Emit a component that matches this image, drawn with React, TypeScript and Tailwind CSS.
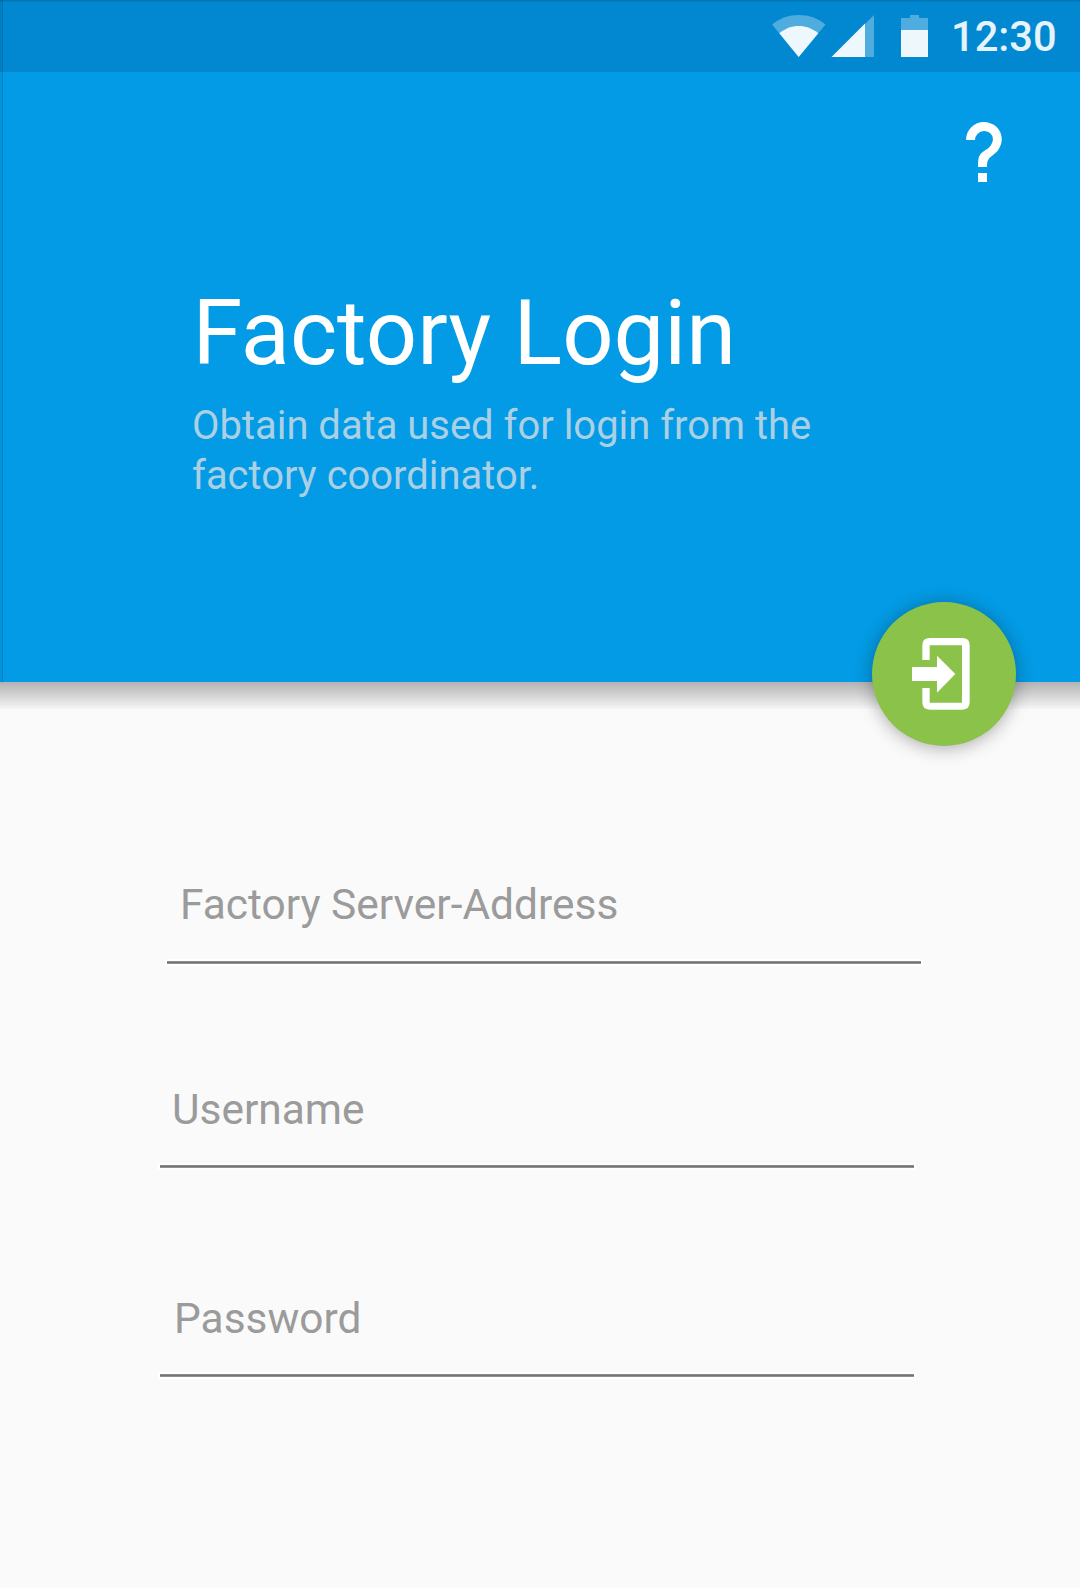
import React from "react";

function StatusBar() {
  return (
    <div className="flex h-[72px] items-start justify-end bg-[#0288d1] pr-[24px] shadow-[inset_0_2px_2px_-1px_rgba(0,0,0,0.2)]">
      <svg className="mt-[15px] h-[42px] w-[156px] shrink-0" viewBox="772 15 156 42" fill="#fff">
        <path fillOpacity="0.3" d="M772 24.5C780 18 789 15 798.7 15S817.500 18 825.500 24.500L798.700 57Z" />
        <path fillOpacity="0.9" d="M779.300 33.300C785 28.500 791.500 26 798.700 26S812.500 28.500 818.300 33.300L798.700 57Z" />
        <path fillOpacity="0.3" d="M865 24V57H874V15Z" />
        <path fillOpacity="0.93" d="M831.500 57H865V23.500Z" />
        <path fillOpacity="0.3" d="M910 15h9v3h9v12h-27V18h9Z" />
        <path fillOpacity="0.93" d="M901 30h27v27h-27Z" />
      </svg>
      <span className="ml-[23px] mt-[12px] w-[105px] whitespace-nowrap text-[41.600px] font-medium leading-[50px] text-white/90">12:30</span>
    </div>
  );
}

function Field({ label, className, labelClass }: { label: string; className: string; labelClass: string }) {
  return (
    <label className={`flex w-[754px] flex-col justify-between ${className}`}>
      <span className={`h-[50px] whitespace-nowrap text-[42.450px] leading-[50px] text-[#9b9b9b] ${labelClass}`}>{label}</span>
      <span className="h-[3px] bg-linear-to-b from-[#959595] via-[#747474] to-[#9f9f9f] shadow-[0_0_0_2px_#fff]" />
    </label>
  );
}

export default function App() {
  return (
    <main className="flex h-[1588px] w-[1080px] flex-col overflow-hidden bg-[#fafafa] font-[Roboto,sans-serif]">
      <header className="relative flex h-[682px] shrink-0 flex-col bg-[#039be5]">
        <StatusBar />
        <div className="flex h-[211px] justify-end pr-[60px] pt-[44px]">
          <button aria-label="Help" className="h-[72px] w-[72px]">
            <svg className="h-[72px] w-[72px]" viewBox="0 0 24 24" fill="#fff">
              <path d="M10 19H13V22H10V19M12 2C17.35 2.22 19.68 7.62 16.5 11.67C15.67 12.67 14.33 13.33 13.67 14.17C13 15 13 16 13 17H10C10 15.33 10 13.92 10.67 12.92C11.33 11.92 12.67 11.33 13.5 10.67C15.92 8.43 15.32 5.26 12 5A3 3 0 0 0 9 8H6A6 6 0 0 1 12 2Z" />
            </svg>
          </button>
        </div>
        <h1 className="h-[100px] pl-[192.500px] whitespace-nowrap text-[90.200px] leading-[100px] text-white">Factory Login</h1>
        <p className="mt-[18px] pl-[192px] whitespace-nowrap text-[39.950px] leading-[50px] text-[#abd0e4]">
          Obtain data used for login from the
          <br />
          factory coordinator.
        </p>
        <div className="absolute inset-y-0 left-0 w-[3px] border-r border-black/10 bg-black/5" />
        <button
          aria-label="Log in"
          className="absolute left-[872px] top-[602px] z-10 flex h-[144px] w-[144px] items-center justify-center rounded-full bg-[#8bc34a] shadow-[0_2px_18px_rgba(0,0,0,0.32)]"
        >
          <svg className="mr-[6px] h-[71.670px] w-[57.670px]" viewBox="186 174 173 215" fill="#fff">
            <path d="M217 240V196Q217 174 239 174H337Q359 174 359 196V367Q359 389 337 389H239Q217 389 217 367V324H239V368H336V196H239V240Z" />
            <path d="M186 261H261V227L316 282L261 338V303H186Z" />
          </svg>
        </button>
      </header>
      <div className="h-[27px] shrink-0 bg-linear-to-b from-[#b3b3b3] to-[#f6f6f6]" />
      <form className="flex flex-col">
        <Field label="Factory Server-Address" className="ml-[167px] mt-[171px] h-[84px]" labelClass="pl-[13px]" />
        <Field label="Username" className="ml-[160px] mt-[121px] h-[83px]" labelClass="pl-[12px]" />
        <Field label="Password" className="ml-[160px] mt-[126px] h-[83px]" labelClass="pl-[14px]" />
      </form>
    </main>
  );
}
